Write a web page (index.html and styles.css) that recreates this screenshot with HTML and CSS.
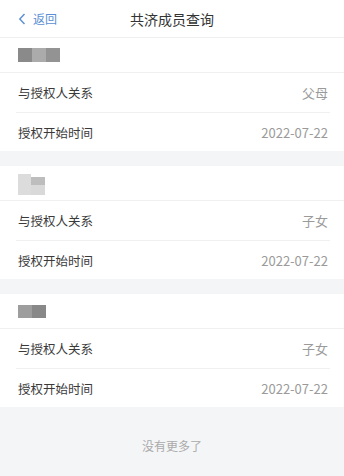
FILE: index.html
```html
<!DOCTYPE html>
<html lang="zh-CN">

<head>
    <meta charset="UTF-8">
    <meta name="viewport" content="width=device-width, initial-scale=1.0">
    <title>共济成员查询</title>
    <link rel="stylesheet" href="styles.css">
</head>

<body>
    <header class="nav">
        <a class="back" href="#">
            <svg class="back-icon" width="8" height="12" viewBox="0 0 8 12">
                <path d="M6.5 1 L1.8 6 L6.5 11" fill="none" stroke="#5a8fd3" stroke-width="1.4" />
            </svg>
            <span>返回</span>
        </a>
        <h1 class="title">共济成员查询</h1>
        <span></span>
    </header>

    <div class="card">
        <div class="name-row">
            <div class="mask">
                <span class="m1"></span><span class="m2"></span><span class="m3"></span>
            </div>
        </div>
        <div class="field">
            <span class="label">与授权人关系</span>
            <span class="value">父母</span>
        </div>
        <div class="field">
            <span class="label">授权开始时间</span>
            <span class="value">2022-07-22</span>
        </div>
    </div>

    <div class="card">
        <div class="name-row">
            <div class="mask mask-b">
                <span class="col-left"></span>
                <span class="col-right"><i class="top"></i><i class="bottom"></i></span>
            </div>
        </div>
        <div class="field">
            <span class="label">与授权人关系</span>
            <span class="value">子女</span>
        </div>
        <div class="field">
            <span class="label">授权开始时间</span>
            <span class="value">2022-07-22</span>
        </div>
    </div>

    <div class="card">
        <div class="name-row">
            <div class="mask mask-c">
                <span class="c1"></span><span class="c2"></span>
            </div>
        </div>
        <div class="field">
            <span class="label">与授权人关系</span>
            <span class="value">子女</span>
        </div>
        <div class="field">
            <span class="label">授权开始时间</span>
            <span class="value">2022-07-22</span>
        </div>
    </div>

    <div class="no-more">没有更多了</div>
</body>

</html>
```

FILE: styles.css
```css
:root {
    --page-bg: #f4f5f7;
    --card-bg: #ffffff;
    --text-color: #3a3a3a;
    --muted-color: #9a9a9a;
    --line-color: #f0f0f0;
    --link-color: #5a8fd3;
}

body {
    margin: 0;
    font-family: "Noto Sans CJK SC", "Noto Sans", sans-serif;
    background-color: var(--page-bg);
    color: var(--text-color);
}

.nav {
    display: grid;
    grid-template-columns: 1fr auto 1fr;
    align-items: center;
    height: 37px;
    background-color: var(--card-bg);
    border-bottom: 1px solid var(--line-color);
}

.back {
    display: flex;
    align-items: center;
    padding-left: 18px;
    color: var(--link-color);
    font-size: 12px;
    text-decoration: none;
}

.back-icon {
    margin-right: 7px;
}

.title {
    margin: 0;
    font-size: 14px;
    font-weight: normal;
    color: #333333;
}

.card {
    background-color: var(--card-bg);
    margin-bottom: 15px;
}

.name-row {
    display: flex;
    align-items: center;
    height: 34px;
    padding-left: 18px;
    border-bottom: 1px solid var(--line-color);
}

.mask {
    display: flex;
    height: 14px;
    filter: blur(0.4px);
}

.mask span {
    width: 14px;
}

.m1 { background-color: #8a8a8a; }
.m2 { background-color: #ababab; }
.m3 { background-color: #939393; }

.mask-b {
    height: 21px;
    margin-top: 2px;
}

.mask-b .col-left {
    width: 13px;
    background-color: #dcdcdc;
}

.mask-b .col-right {
    display: flex;
    flex-direction: column;
    padding-top: 3px;
}

.mask-b i {
    display: block;
    width: 14px;
}

.mask-b .top {
    height: 8px;
    background-color: #bdbdbd;
}

.mask-b .bottom {
    height: 10px;
    background-color: #d9d9d9;
}

.mask-c {
    height: 13px;
}

.c1 { background-color: #9d9d9d; }
.c2 { background-color: #888888; }

.field {
    display: flex;
    justify-content: space-between;
    align-items: center;
    height: 38px;
    margin: 0 14px 0 16px;
    padding: 0 2px;
    font-size: 12.5px;
}

.field + .field {
    border-top: 1px solid var(--line-color);
}

.name-row + .field {
    height: 39px;
}

.label {
    color: var(--text-color);
}

.value {
    color: var(--muted-color);
    font-size: 13px;
}

.no-more {
    padding: 15px 0 20px;
    text-align: center;
    font-size: 12px;
    line-height: 18px;
    color: #aaaaaa;
}
```
